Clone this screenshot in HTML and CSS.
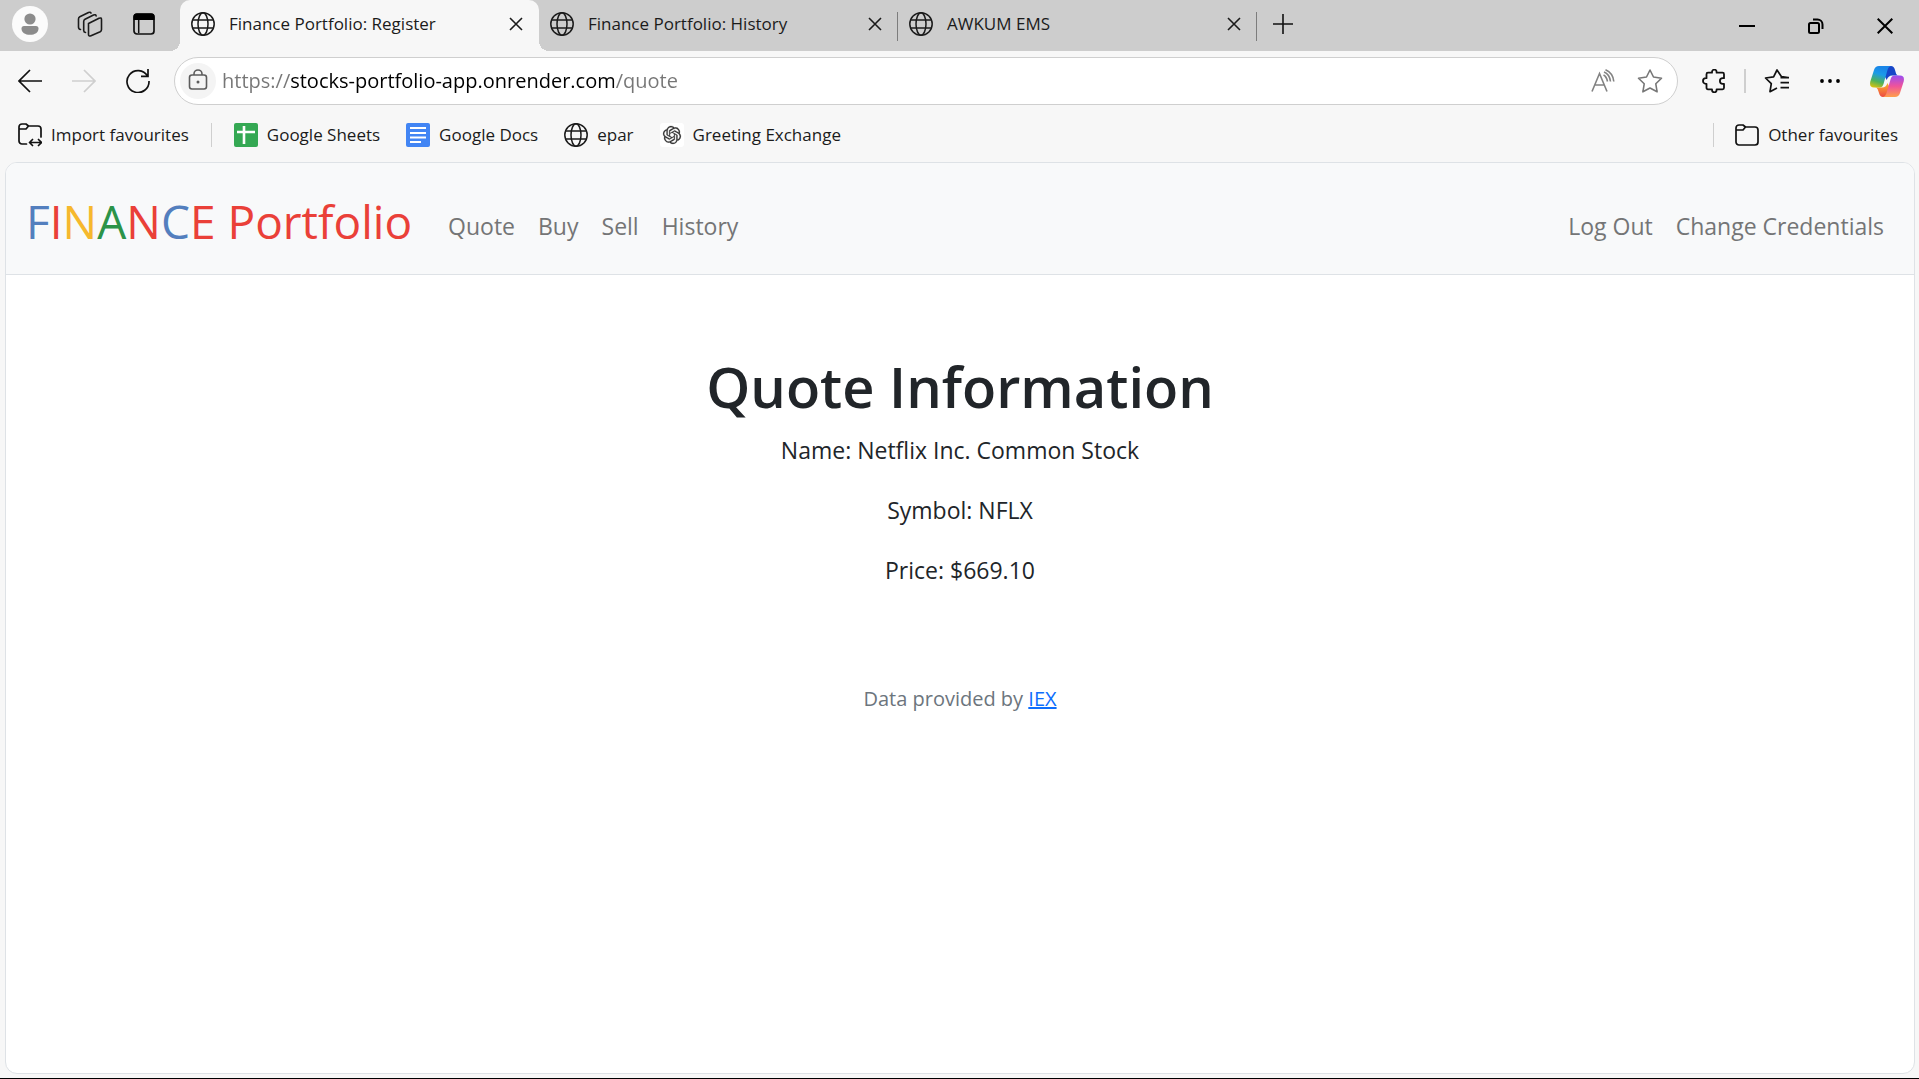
FILE: index.html
```html
<!DOCTYPE html>
<html lang="en">
<head>
<meta charset="utf-8">
<title>Finance Portfolio: Register</title>
<link rel="stylesheet" href="styles.css">
</head>
<body>
<svg class="sprite" aria-hidden="true">
  <symbol id="globe" viewBox="0 0 24 24"><g fill="none" stroke="currentColor" stroke-width="1.5"><circle cx="12" cy="12" r="11.2"/><ellipse cx="12" cy="12" rx="5" ry="11.2"/><path d="M2 8h20M2 16h20"/></g></symbol>
  <symbol id="close" viewBox="0 0 14 14"><path d="M1 1l12 12M13 1L1 13" fill="none" stroke="currentColor" stroke-width="1.6"/></symbol>
</svg>
<div class="browser">
  <header class="tabstrip">
    <div class="strip-tools">
      <button class="icon-btn avatar" aria-label="Profile"><svg width="36" height="36" viewBox="0 0 36 36"><circle cx="18" cy="18" r="18" fill="#fbfbfb"/><circle cx="18" cy="13" r="5.6" fill="#8c8c8c"/><path d="M12 20h12a2.500 2.500 0 0 1 2.500 2.500c0 4-3.500 6.300-8.500 6.300s-8.500-2.300-8.500-6.300A2.500 2.500 0 0 1 12 20z" fill="#8c8c8c"/></svg></button>
      <button class="icon-btn" aria-label="Workspaces"><svg width="26" height="26" viewBox="0 0 26 26"><g fill="none" stroke="#1b1b1b" stroke-width="1.6" stroke-linejoin="round" stroke-linecap="round"><path d="M11.500 12.500L22 7.200q2.500-.9 2.500 1.300v10q0 1.600-1.300 2.300L14 24.700q-2.500 1-2.500-1.300z"/><path d="M8.500 21.500q-1.800-.2-1.800-2V10.500q0-1.500 1.300-2.200L16.500 4q2.300-.8 2.600.9"/><path d="M3.500 18.500Q1.500 18.300 1.500 16V8q0-1.500 1.300-2.200L11.500 1.500q2-.8 2.500.6"/></g></svg></button>
      <button class="icon-btn" aria-label="Tab actions"><svg width="24" height="24" viewBox="0 0 24 24"><rect x="2" y="2" width="20" height="20" rx="3" fill="none" stroke="#111" stroke-width="1.7"/><path d="M1.500 8V4.500a3 3 0 0 1 3-3h15a3 3 0 0 1 3 3V8z" fill="#000"/><path d="M6.700 8v13" stroke="#111" stroke-width="1.500"/></svg></button>
    </div>
    <div class="tab active">
      <button class="tab-main"><svg width="24" height="24"><use href="#globe"/></svg><span>Finance Portfolio: Register</span></button>
      <button class="tab-close" aria-label="Close tab"><svg width="14" height="14"><use href="#close"/></svg></button>
    </div>
    <div class="tab">
      <button class="tab-main"><svg width="24" height="24"><use href="#globe"/></svg><span>Finance Portfolio: History</span></button>
      <button class="tab-close" aria-label="Close tab"><svg width="14" height="14"><use href="#close"/></svg></button>
    </div>
    <div class="tab">
      <button class="tab-main"><svg width="24" height="24"><use href="#globe"/></svg><span>AWKUM EMS</span></button>
      <button class="tab-close" aria-label="Close tab"><svg width="14" height="14"><use href="#close"/></svg></button>
    </div>
    <button class="icon-btn new-tab" aria-label="New tab"><svg width="22" height="22" viewBox="0 0 22 22"><path d="M11 1v20M1 11h20" stroke="#111" stroke-width="1.6"/></svg></button>
    <div class="window-controls">
      <button class="icon-btn" aria-label="Minimise"><svg width="16" height="16" viewBox="0 0 16 16"><path d="M0 8h16" stroke="#000" stroke-width="2"/></svg></button>
      <button class="icon-btn" aria-label="Restore"><svg width="16" height="16" viewBox="0 0 16 16"><g fill="none" stroke="#000" stroke-width="2"><rect x="1" y="5" width="10" height="10" rx="1.500"/><path d="M5 1.500h4.500a5 5 0 0 1 5 5V11"/></g></svg></button>
      <button class="icon-btn" aria-label="Close window"><svg width="16" height="16" viewBox="0 0 16 16"><path d="M.7.7l14.600 14.600M15.300.7L.7 15.300" stroke="#000" stroke-width="2"/></svg></button>
    </div>
  </header>

  <div class="toolbar">
    <button class="icon-btn" aria-label="Back"><svg width="24" height="24" viewBox="0 0 24 24"><path d="M12 1L1 12l11 11M1 12h23" fill="none" stroke="#111" stroke-width="1.700"/></svg></button>
    <button class="icon-btn" aria-label="Forward" disabled><svg width="24" height="24" viewBox="0 0 24 24"><path d="M12 1l11 11-11 11M23 12H0" fill="none" stroke="#cfcfcf" stroke-width="1.700"/></svg></button>
    <button class="icon-btn" aria-label="Refresh"><svg width="24" height="24" viewBox="0 0 24 24"><path d="M21.500 7A11 11 0 1 0 23 12M22 0v7.300h-7" fill="none" stroke="#111" stroke-width="1.700"/></svg></button>
    <form class="address">
      <button type="button" class="site-info" aria-label="Site information"><svg width="20" height="22" viewBox="0 0 20 22"><g fill="none" stroke="#5c5c5c" stroke-width="1.600"><rect x="1.500" y="6" width="17" height="14" rx="2.500"/><path d="M6 6V5a4 4 0 0 1 8 0v1"/></g><circle cx="10" cy="13" r="1.500" fill="#5c5c5c"/></svg></button>
      <input class="url" type="text" aria-label="Address" value="https://stocks-portfolio-app.onrender.com/quote">
      <button type="button" class="icon-btn" aria-label="Read aloud"><svg width="24" height="24" viewBox="0 0 24 24"><g fill="none" stroke="#828282" stroke-width="1.600"><path d="M1 22.500L8.500 4.500 16 22.500M3.700 16h9.600M12.500 6q3 1.500 4 6.500M13 3q5.500 2 6.500 9.500M14.500.8Q22 4 22.800 12.500"/></g></svg></button>
      <button type="button" class="icon-btn" aria-label="Add to favourites"><svg width="26" height="26" viewBox="0 0 26 26"><path d="M13 2l3.500 7 8 1.200-5.700 5.600 1.300 8-7.100-3.800-7.100 3.800 1.300-8-5.700-5.600 8-1.200z" fill="none" stroke="#777" stroke-width="1.600" stroke-linejoin="round"/></svg></button>
    </form>
    <div class="toolbar-end">
      <button class="icon-btn" aria-label="Extensions"><svg width="24" height="24" viewBox="0 0 24 24"><path d="M6 3.700h4V3a2.300 2.300 0 0 1 4.600 0v.7h5.900q1.500 0 1.500 1.500v4h-1.300a2.800 2.800 0 0 0 0 5.600H22v4q0 1.500-1.500 1.500h-5.900v.7a2.300 2.300 0 0 1-4.600 0v-.7H6q-1.500 0-1.500-1.500v-4h-.7a2.800 2.800 0 0 1 0-5.600h.7v-4Q4.500 3.700 6 3.700z" fill="none" stroke="#111" stroke-width="1.800" stroke-linejoin="round"/></svg></button>
      <span class="divider"></span>
      <button class="icon-btn" aria-label="Favourites"><svg width="26" height="26" viewBox="0 0 26 26"><path d="M24 9.700l-6.500-1L13 2 9.600 8.900 1.500 10l5.800 5.700L6 23.700l7-3.800M16.500 9.700H25M16.500 14.700H25M16.500 19.700H25" fill="none" stroke="#111" stroke-width="1.700" stroke-linejoin="round"/></svg></button>
      <button class="icon-btn" aria-label="Settings and more"><svg width="20" height="6" viewBox="0 0 20 6"><circle cx="2" cy="3" r="1.900"/><circle cx="10" cy="3" r="1.900"/><circle cx="18" cy="3" r="1.900"/></svg></button>
      <button class="icon-btn" aria-label="Copilot"><svg width="34" height="31" viewBox="0 0 34 31">
        <defs>
          <linearGradient id="cp-left" x1=".3" y1="0" x2="0" y2="1"><stop offset="0" stop-color="#1a86e8"/><stop offset=".3" stop-color="#1b9be8"/><stop offset=".65" stop-color="#4fb25a"/><stop offset="1" stop-color="#f2c500"/></linearGradient>
          <linearGradient id="cp-right" x1="0" y1="0" x2="0" y2="1"><stop offset="0" stop-color="#9a4df2"/><stop offset=".5" stop-color="#f0539a"/><stop offset="1" stop-color="#ffa04a"/></linearGradient>
          <linearGradient id="cp-low" x1="0" y1="0" x2="0" y2="1"><stop offset="0" stop-color="#ffb12a"/><stop offset="1" stop-color="#ec4a45"/></linearGradient>
        </defs>
        <path d="M17 0h4q3 0 4 4l1.200 4q.8 1.500 3 1.500h-7q-4 0-5.500 4.500L14 9z" fill="#1746c8"/>
        <path d="M17 31h-4q-3 0-4-4l-1.200-3.500Q7 21.500 5 21.500h7q4 0 5.500-4.500L20 22z" fill="url(#cp-low)"/>
        <path d="M9 0h12q-2.500.5-3.500 4l-4 14q-1 3.500-4 3.500H4q-5 0-3.700-6L4 4q1.200-4 5-4z" fill="url(#cp-left)"/>
        <path d="M25 31H13q2.500-.5 3.500-4l4-13.500q1-4 4-4H30q5 0 3.700 6L30 27q-1.200 4-5 4z" fill="url(#cp-right)"/>
      </svg></button>
    </div>
  </div>

  <nav class="bookmarks" aria-label="Favourites bar">
    <a href="#import"><svg width="24" height="24" viewBox="0 0 24 24"><g fill="none" stroke="#111" stroke-width="1.700" stroke-linecap="round" stroke-linejoin="round"><path d="M8.500 21H4a3 3 0 0 1-3-3V4a3 3 0 0 1 3-3h4l2.500 2H20a3 3 0 0 1 3 3v8M1 6h7l2.500-3M12 19.500h11M14.500 16.500l-3 3 3 3M20.500 16.500l3 3-3 3"/></g></svg>Import favourites</a>
    <span class="divider"></span>
    <a href="#sheets"><svg width="24" height="24" viewBox="0 0 24 24"><rect width="24" height="24" rx="2" fill="#34a853"/><path d="M10 3v18M3 9h18" stroke="#fff" stroke-width="2.600"/></svg>Google Sheets</a>
    <a href="#docs"><svg width="24" height="24" viewBox="0 0 24 24"><rect width="24" height="24" rx="2" fill="#4285f4"/><path d="M4 5h16M4 10h16M4 14.500h16M4 19h11" stroke="#fff" stroke-width="2"/></svg>Google Docs</a>
    <a href="#epar"><svg width="24" height="24"><use href="#globe"/></svg>epar</a>
    <a href="#greeting"><svg width="24" height="24" viewBox="0 0 24 24"><rect width="24" height="24" rx="3" fill="#fff"/><path transform="translate(3 3) scale(.75)" fill="#333" stroke="#333" stroke-width=".3" d="M22.2819 9.8211a5.9847 5.9847 0 0 0-.5157-4.9108 6.0462 6.0462 0 0 0-6.5098-2.9A6.0651 6.0651 0 0 0 4.9807 4.1818a5.9847 5.9847 0 0 0-3.9977 2.9 6.0462 6.0462 0 0 0 .7427 7.0966 5.98 5.98 0 0 0 .511 4.9107 6.051 6.051 0 0 0 6.5146 2.9001A5.9847 5.9847 0 0 0 13.2599 24a6.0557 6.0557 0 0 0 5.7718-4.2058 5.9894 5.9894 0 0 0 3.9977-2.9001 6.0557 6.0557 0 0 0-.7475-7.0729zm-9.022 12.6081a4.4755 4.4755 0 0 1-2.8764-1.0408l.1419-.0804 4.7783-2.7582a.7948.7948 0 0 0 .3927-.6813v-6.7369l2.02 1.1686a.071.071 0 0 1 .038.052v5.5826a4.504 4.504 0 0 1-4.4945 4.4944zm-9.6607-4.1254a4.4708 4.4708 0 0 1-.5346-3.0137l.142.0852 4.783 2.7582a.7712.7712 0 0 0 .7806 0l5.8428-3.3685v2.3324a.0804.0804 0 0 1-.0332.0615L9.74 19.9502a4.4992 4.4992 0 0 1-6.1408-1.6464zM2.3408 7.8956a4.485 4.485 0 0 1 2.3655-1.9728V11.6a.7664.7664 0 0 0 .3879.6765l5.8144 3.3543-2.0201 1.1685a.0757.0757 0 0 1-.071 0l-4.8303-2.7865A4.504 4.504 0 0 1 2.3408 7.872zm16.5963 3.8558L13.1038 8.364 15.1192 7.2a.0757.0757 0 0 1 .071 0l4.8303 2.7913a4.4944 4.4944 0 0 1-.6765 8.1042v-5.6772a.79.79 0 0 0-.407-.667zm2.0107-3.0231l-.142-.0852-4.7735-2.7818a.7759.7759 0 0 0-.7854 0L9.409 9.2297V6.8974a.0662.0662 0 0 1 .0284-.0615l4.8303-2.7866a4.4992 4.4992 0 0 1 6.6802 4.66zM8.3065 12.863l-2.02-1.1638a.0804.0804 0 0 1-.038-.0567V6.0742a4.4992 4.4992 0 0 1 7.3757-3.4537l-.142.0805L8.704 5.459a.7948.7948 0 0 0-.3927.6813zm1.0976-2.3654l2.602-1.4998 2.6069 1.4998v2.9994l-2.5974 1.4997-2.6067-1.4997Z"/></svg>Greeting Exchange</a>
    <div class="bookmarks-end">
      <span class="divider"></span>
      <a href="#other"><svg width="24" height="24" viewBox="0 0 24 24"><path d="M1 5a3 3 0 0 1 3-3h4l2.500 2H20a3 3 0 0 1 3 3v12a3 3 0 0 1-3 3H4a3 3 0 0 1-3-3zM1 7h7l2.500-3" fill="none" stroke="#111" stroke-width="1.700" stroke-linejoin="round"/></svg>Other favourites</a>
    </div>
  </nav>

  <div class="page">
    <nav class="site-nav">
      <a class="brand" href="#home"><span class="blue">F</span><span class="red">I</span><span class="yellow">N</span><span class="green">A</span><span class="red">N</span><span class="blue">C</span><span class="red">E Portfolio</span></a>
      <div class="links">
        <a href="#quote">Quote</a>
        <a href="#buy">Buy</a>
        <a href="#sell">Sell</a>
        <a href="#history">History</a>
      </div>
      <div class="links links-end">
        <a href="#logout">Log Out</a>
        <a href="#credentials">Change Credentials</a>
      </div>
    </nav>
    <main>
      <h1>Quote Information</h1>
      <p>Name: Netflix Inc. Common Stock</p>
      <p>Symbol: NFLX</p>
      <p>Price: $669.10</p>
    </main>
    <footer>Data provided by <a href="#iex">IEX</a></footer>
  </div>
</div>
</body>
</html>
```
FILE: styles.css
```css
* { box-sizing: border-box; }
body {
  margin: 0;
  font-family: "Open Sans", "Noto Sans", sans-serif;
  font-size: 17px;
  line-height: 24px;
  color: #1b1b1b;
}
button { padding: 0; border: 0; background: none; font: inherit; color: inherit; }
svg { display: block; flex: none; }
a { text-decoration: none; color: inherit; }
.sprite { position: absolute; width: 0; height: 0; }

.browser {
  display: flex;
  flex-direction: column;
  min-height: 100vh;
  background: #f7f7f7;
  border-bottom: 1px solid #000;
}
.icon-btn { display: flex; align-items: center; justify-content: center; flex: none; }
.divider { width: 1px; height: 24px; background: #cfcfcf; }

/* Tab strip */
.tabstrip { display: flex; height: 51px; background: #cdcdcd; }
.strip-tools { display: flex; align-items: center; gap: 29px; width: 180px; padding: 0 0 3px 12px; }
.tab { position: relative; display: flex; align-items: center; flex: 0 1 359px; padding: 0 16px 3px 11px; }
.tab.active { background: #f7f7f7; border-radius: 10px 10px 0 0; }
.tab.active::before,
.tab.active::after {
  content: "";
  position: absolute;
  bottom: 0;
  width: 10px;
  height: 10px;
}
.tab.active::before { left: -10px; background: radial-gradient(circle at 0 0, transparent 10px, #f7f7f7 10px); }
.tab.active::after { right: -10px; background: radial-gradient(circle at 100% 0, transparent 10px, #f7f7f7 10px); }
.tab:not(.active)::after {
  content: "";
  position: absolute;
  right: 0;
  top: 12px;
  width: 1px;
  height: 29px;
  background: #7d7d7d;
}
.tab-main { display: flex; align-items: center; gap: 14px; flex: 1; text-align: left; }
.new-tab { width: 52px; padding-bottom: 4px; }
.window-controls { display: flex; margin-left: auto; }
.window-controls .icon-btn { width: 69px; }

/* Toolbar */
.toolbar { display: flex; align-items: center; gap: 30px; padding: 6px 15px 6px 18px; }
.address {
  display: flex;
  align-items: center;
  gap: 22px;
  flex: 1;
  height: 48px;
  margin-left: -6px;
  padding: 0 14px 0 5px;
  background: #fff;
  border: 1px solid #cfcfcf;
  border-radius: 24px;
}
.site-info {
  display: flex;
  align-items: center;
  justify-content: center;
  width: 36px;
  height: 36px;
  margin-right: -16px;
  padding-bottom: 2px;
  border-radius: 50%;
  background: #f4f4f4;
}
.url {
  flex: 1;
  padding: 0;
  border: 0;
  outline: 0;
  font: inherit;
  font-size: 20px;
  line-height: 30px;
  color: transparent;
  background: linear-gradient(90deg, #767676 68px, #000 68px, #000 392px, #767676 392px);
  -webkit-background-clip: text;
  background-clip: text;
}
.toolbar-end { display: flex; align-items: center; gap: 30px; margin-left: -6px; }
.toolbar-end .divider { margin: 0 -12px; width: 2px; }

/* Favourites bar */
.bookmarks { display: flex; align-items: center; gap: 26px; height: 51px; padding: 0 21px 3px 18px; }
.bookmarks > .divider { margin: 0 -4px; }
.bookmarks a { display: flex; align-items: center; gap: 9px; }
.bookmarks-end { display: flex; align-items: center; gap: 21px; margin-left: auto; }

/* Web page */
.page {
  flex: 1;
  margin: 0 4px 4px 5px;
  background: #fff;
  border: 1px solid #dee2e6;
  border-radius: 12px;
  overflow: hidden;
}
.site-nav {
  display: flex;
  align-items: center;
  padding: 22px 30px 17px 20px;
  background: #f8f9fa;
  border-bottom: 1px solid #dee2e6;
  font-size: 23px;
}
.brand { font-size: 46px; line-height: 72px; margin-right: 36px; }
.blue { color: #537fbe; }
.red { color: #ea4038; }
.yellow { color: #f6b82d; }
.green { color: #2b9348; }
.links { display: flex; gap: 23px; padding-top: 10px; line-height: 36px; color: #747576; }
.links-end { margin-left: auto; }
main { padding: 75px 24px 72px; text-align: center; color: #212529; font-size: 23px; line-height: 36px; }
h1 { margin: 0 0 10px; font-size: 56px; line-height: 72px; font-weight: 600; }
p { margin: 0 0 24px; }
footer { text-align: center; font-size: 20px; line-height: 30px; color: #6c757d; }
footer a { color: #0d6efd; text-decoration: underline; }
```
